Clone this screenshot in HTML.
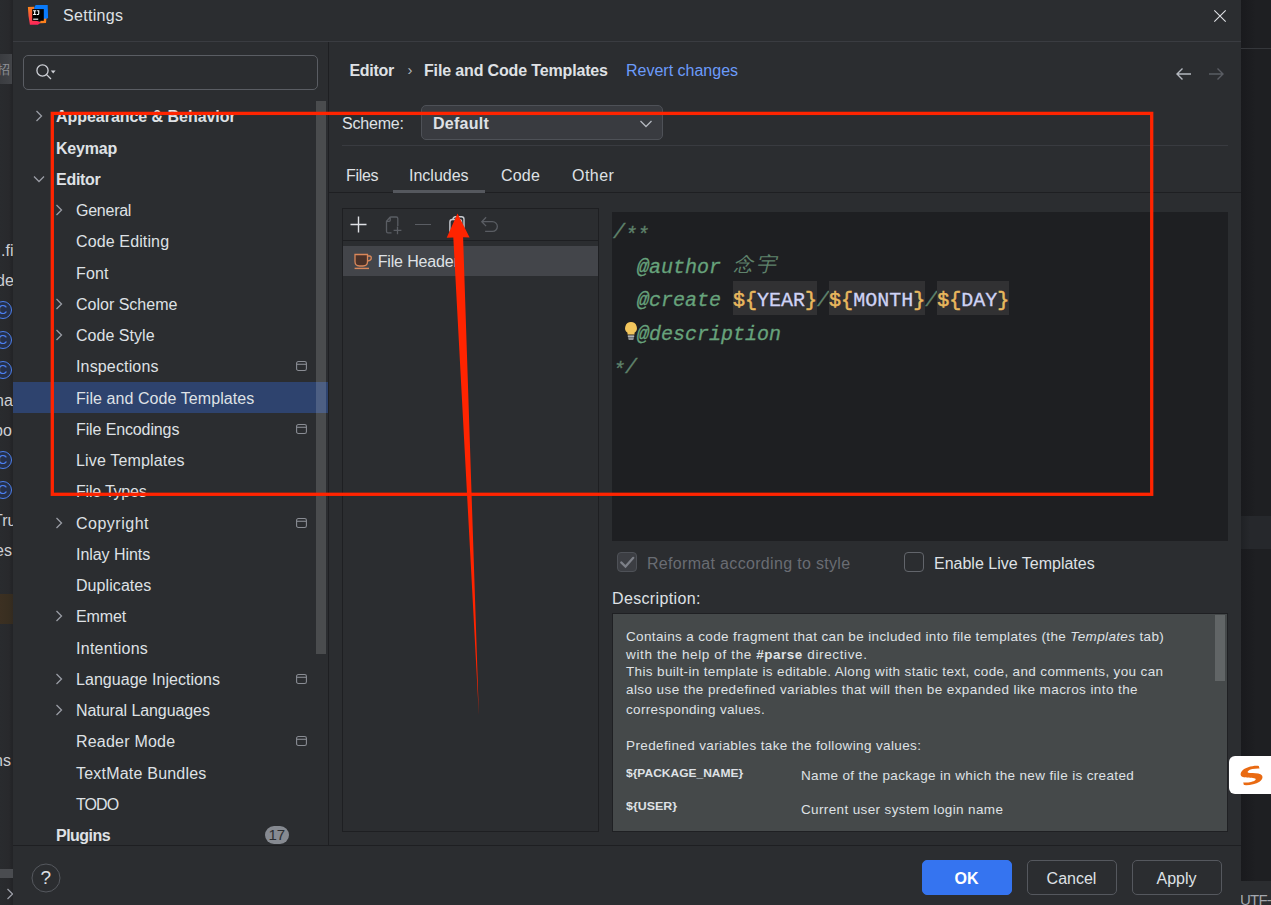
<!DOCTYPE html>
<html>
<head>
<meta charset="utf-8">
<title>Settings</title>
<style>
*{box-sizing:border-box;margin:0;padding:0}
html,body{width:1271px;height:905px;overflow:hidden;background:#1e1f22}
body{font-family:"Liberation Sans",sans-serif;font-size:16px;color:#dfe1e5;position:relative}
.a{position:absolute;white-space:nowrap}
#dlg{position:absolute;left:13px;top:0;width:1227.5px;height:905px;background:#2b2d30;overflow:hidden}
#titlebar{position:absolute;left:0;top:0;width:1228px;height:42px;border-bottom:1px solid #3a3c41}
#vdiv{position:absolute;left:315px;top:42px;width:1px;height:803px;background:#1e1f22}
#search{position:absolute;left:10px;top:55px;width:295px;height:35px;border:1px solid #5a5d63;border-radius:5px}
.row{position:absolute;left:0;width:315px;height:31px;line-height:31px;font-size:16px;color:#dfe1e5;white-space:nowrap}
.row.b{font-weight:bold}
.row span.t{position:absolute;top:1px}
.l0 span.t{left:43px}
.l1 span.t{left:63px}
.sel{background:#2e436e}
.chev{position:absolute;top:9.6px;width:12px;height:12px}
.mod{position:absolute;left:283px;top:10.5px;width:11px;height:10px}
.badge{position:absolute;left:251.5px;top:7px;width:24.5px;height:18px;border-radius:9px;background:#868a91;color:#2b2d30;font-weight:normal;font-size:15px;line-height:18px;text-align:center}
#sbar{position:absolute;left:303.4px;top:101px;width:9.8px;height:553px;background:rgba(255,255,255,0.15)}
#bottomline{position:absolute;left:0;top:845px;width:1228px;height:1px;background:#1e1f22}
.btn{position:absolute;top:859.5px;height:35.5px;border:1px solid #55585e;border-radius:5px;text-align:center;line-height:35px;font-size:16px;color:#dfe1e5}
.tab{position:absolute;top:166px;line-height:20px;font-size:16px;color:#dfe1e5}
#code{position:absolute;left:599px;top:212px;width:616px;height:329px;background:#1e1f22;font-family:"Liberation Mono",monospace;font-size:20px;font-style:italic}
.cl{position:absolute;left:1px;height:33.75px;line-height:33.75px;white-space:pre;color:#5f826b;-webkit-text-stroke:0.3px}
.cl>span,.v>*{position:relative;top:2.8px}
.cl>span.v{top:0}
.cl s{text-decoration:none;position:relative;top:2.5px}
.cj{font-family:"Liberation Sans",sans-serif;font-size:20px;-webkit-text-stroke:0;letter-spacing:2.5px}
.cl>span.cj{top:0.5px}
.tg{color:#67a37c}
.v{background:#313133;font-style:normal;display:inline-block;height:33.75px}
.v b{color:#e8b85e;font-weight:normal;-webkit-text-stroke:0.55px #e8b85e}
.v i{color:#cfd3f5;font-style:normal}
#desc{position:absolute;left:599px;top:613px;width:616px;height:219px;background:#45494a;border:1px solid #1f2023;overflow:hidden;font-size:13.5px;color:#dfe1e5}
#desc .a{line-height:16px}
.cb{position:absolute;top:552px;width:20px;height:20px;border-radius:4px}
.lf{font-size:16px;line-height:20px;color:#cdcfd4}
.ci{left:-6.2px;width:18px;height:18px;border:1.5px solid #4d80ee;border-radius:50%;background:#25304a}
.cc{left:-2.2px;width:10px;font-size:13px;line-height:18px;color:#4d80ee;text-align:center}
</style>
</head>
<body>
<!-- background app fragments -->
<div id="bg">
  <!-- left strip of underlying IDE -->
  <div class="a" style="left:0;top:0;width:13px;height:905px;background:linear-gradient(to right,#292b2e 0,#28292c 9px,#232427 12px,#232427 13px);overflow:hidden">
    <div class="a" style="left:0;top:54.3px;width:12.3px;height:30.2px;background:linear-gradient(to right,#3a3c40,#424448)"></div>
    <div class="a" style="left:-3.5px;top:60px;font-size:13px;line-height:20px;color:#8e9197">招</div>
    <div class="a lf" style="top:241px;left:1px">.fi</div>
    <div class="a lf" style="top:271px;left:-4px">de</div>
    <div class="a ci" style="top:301px"></div><div class="a cc" style="top:301px">C</div>
    <div class="a ci" style="top:331px"></div><div class="a cc" style="top:331px">C</div>
    <div class="a ci" style="top:361px"></div><div class="a cc" style="top:361px">C</div>
    <div class="a lf" style="top:391px;left:-5px">na</div>
    <div class="a lf" style="top:421px;left:-6px">bo</div>
    <div class="a ci" style="top:451px"></div><div class="a cc" style="top:451px">C</div>
    <div class="a ci" style="top:481px"></div><div class="a cc" style="top:481px">C</div>
    <div class="a lf" style="top:511px;left:-7px">Tru</div>
    <div class="a lf" style="top:541px;left:-5px">es</div>
    <div class="a" style="left:0;top:594px;width:13px;height:30.3px;background:linear-gradient(to right,#3c3022 0,#382e20 9px,#332a1f 13px)"></div>
    <div class="a lf" style="top:751px;left:-6px">ns</div>
    <div class="a" style="left:0;top:869px;width:13px;height:9px;background:#4a4c50"></div>
    <svg class="a" style="left:6px;top:888px" width="8" height="12" viewBox="0 0 8 12"><path d="M1.5 1 L6.5 6 L1.5 11" fill="none" stroke="#9a9da5" stroke-width="1.3"/></svg>
  </div>
  <!-- right strip -->
  <div class="a" style="left:1240px;top:0;width:31px;height:905px;background:linear-gradient(to right,#191a1d 0,#191a1d 1px,#1e1f22 16px)"></div>
  <div class="a" style="left:1240px;top:48px;width:31px;height:1px;background:#35373b"></div>
  <div class="a" style="left:1240px;top:516px;width:31px;height:33px;background:linear-gradient(to right,#1f2124 0,#26282c 10px)"></div>
  <div class="a" style="left:1240px;top:881px;width:31px;height:24px;background:#2b2d30"></div>
  <div class="a" style="left:1240px;top:890px;font-size:15px;line-height:20px;color:#a4a7ae;letter-spacing:-0.8px">UTF-8</div>
</div>
<div id="dlg">
  <div id="titlebar"></div>
  <svg class="a" style="left:14px;top:4px" width="22" height="22" viewBox="-0.5 0 22 22">
    <defs><linearGradient id="gl" x1="0" y1="0" x2="0.25" y2="1"><stop offset="0" stop-color="#fc8a17"/><stop offset="0.45" stop-color="#fb5a3a"/><stop offset="1" stop-color="#fe2857"/></linearGradient></defs>
    <polygon points="0.4,3 6.9,2.7 7,16 13.6,18.6 10.4,20.8 2.4,20.8 1,12" fill="url(#gl)"/>
    <polygon points="8.1,1.1 20.2,1.1 20.6,13.9 16.6,15.9 6.5,4.2" fill="#0a7bfb"/>
    <polygon points="13.4,15.2 18.9,14.6 18.5,19.1 12.6,19.2" fill="#fc801d"/>
    <rect x="4.7" y="5.1" width="11.6" height="11.7" fill="#000"/>
    <rect x="5.7" y="14.6" width="5" height="1.2" fill="#e8e8e8"/>
    <path d="M5.6 6.3 h3.2 v1 h-1 v2.6 h1 v1 h-3.2 v-1 h1 v-2.6 h-1z M9.6 6.3 h2.2 v3.2 q0 1.5 -1.5 1.5 h-0.9 v-1 h0.7 q0.6 0 0.6 -0.6 v-2.1 h-1.1z" fill="#fff"/>
  </svg>
  <div class="a" style="left:50px;top:6px;line-height:20px;letter-spacing:0.3px">Settings</div>
  <svg class="a" style="left:1199px;top:8px" width="16" height="16" viewBox="0 0 16 16"><path d="M2.3 2.3 L13.7 13.7 M13.7 2.3 L2.3 13.7" stroke="#dfe1e5" stroke-width="1.1" fill="none"/></svg>

  <div id="vdiv"></div>
  <div id="search"></div>
  <svg class="a" style="left:21px;top:62px" width="24" height="20" viewBox="0 0 24 20"><circle cx="8.5" cy="8.5" r="5.6" fill="none" stroke="#ced0d6" stroke-width="1.3"/><path d="M12.6 12.6 L17 17" stroke="#ced0d6" stroke-width="1.3"/><path d="M16.8 8.4 h4.8 l-2.4 3z" fill="#ced0d6"/></svg>
<div class="row l0 b" style="top:100px;height:32px"><svg class="chev" style="left:20px" viewBox="0 0 12 12"><path d="M3.5 1 L8.5 6 L3.5 11" fill="none" stroke="#9a9da5" stroke-width="1.3"/></svg><span class="t" style="letter-spacing:-0.04px">Appearance &amp; Behavior</span></div>
<div class="row l0 b" style="top:132px;height:31px"><span class="t" style="letter-spacing:-0.19px">Keymap</span></div>
<div class="row l0 b" style="top:163px;height:31px"><svg class="chev" style="left:20px" viewBox="0 0 12 12"><path d="M1 3.5 L6 8.5 L11 3.5" fill="none" stroke="#9a9da5" stroke-width="1.3"/></svg><span class="t" style="letter-spacing:-0.28px">Editor</span></div>
<div class="row l1" style="top:194px;height:31px"><svg class="chev" style="left:40px" viewBox="0 0 12 12"><path d="M3.5 1 L8.5 6 L3.5 11" fill="none" stroke="#9a9da5" stroke-width="1.3"/></svg><span class="t" style="letter-spacing:-0.25px">General</span></div>
<div class="row l1" style="top:225px;height:32px"><span class="t" style="letter-spacing:0.13px">Code Editing</span></div>
<div class="row l1" style="top:257px;height:31px"><span class="t" style="letter-spacing:0.16px">Font</span></div>
<div class="row l1" style="top:288px;height:31px"><svg class="chev" style="left:40px" viewBox="0 0 12 12"><path d="M3.5 1 L8.5 6 L3.5 11" fill="none" stroke="#9a9da5" stroke-width="1.3"/></svg><span class="t" style="letter-spacing:0.00px">Color Scheme</span></div>
<div class="row l1" style="top:319px;height:31px"><svg class="chev" style="left:40px" viewBox="0 0 12 12"><path d="M3.5 1 L8.5 6 L3.5 11" fill="none" stroke="#9a9da5" stroke-width="1.3"/></svg><span class="t" style="letter-spacing:0.03px">Code Style</span></div>
<div class="row l1" style="top:350px;height:32px"><span class="t" style="letter-spacing:0.15px">Inspections</span><svg class="mod" viewBox="0 0 12 11"><rect x="0.6" y="0.6" width="10.8" height="9.8" rx="2" fill="none" stroke="#8a8d94" stroke-width="1.2"/><path d="M0.6 3.6 H11.4" stroke="#8a8d94" stroke-width="1.2"/></svg></div>
<div class="row l1 sel" style="top:382px;height:31px"><span class="t" style="letter-spacing:0.07px">File and Code Templates</span></div>
<div class="row l1" style="top:413px;height:31px"><span class="t" style="letter-spacing:-0.12px">File Encodings</span><svg class="mod" viewBox="0 0 12 11"><rect x="0.6" y="0.6" width="10.8" height="9.8" rx="2" fill="none" stroke="#8a8d94" stroke-width="1.2"/><path d="M0.6 3.6 H11.4" stroke="#8a8d94" stroke-width="1.2"/></svg></div>
<div class="row l1" style="top:444px;height:31px"><span class="t" style="letter-spacing:0.16px">Live Templates</span></div>
<div class="row l1" style="top:475px;height:32px"><span class="t" style="letter-spacing:-0.21px">File Types</span></div>
<div class="row l1" style="top:507px;height:31px"><svg class="chev" style="left:40px" viewBox="0 0 12 12"><path d="M3.5 1 L8.5 6 L3.5 11" fill="none" stroke="#9a9da5" stroke-width="1.3"/></svg><span class="t" style="letter-spacing:0.50px">Copyright</span><svg class="mod" viewBox="0 0 12 11"><rect x="0.6" y="0.6" width="10.8" height="9.8" rx="2" fill="none" stroke="#8a8d94" stroke-width="1.2"/><path d="M0.6 3.6 H11.4" stroke="#8a8d94" stroke-width="1.2"/></svg></div>
<div class="row l1" style="top:538px;height:31px"><span class="t" style="letter-spacing:-0.05px">Inlay Hints</span></div>
<div class="row l1" style="top:569px;height:31px"><span class="t" style="letter-spacing:0.07px">Duplicates</span></div>
<div class="row l1" style="top:600px;height:32px"><svg class="chev" style="left:40px" viewBox="0 0 12 12"><path d="M3.5 1 L8.5 6 L3.5 11" fill="none" stroke="#9a9da5" stroke-width="1.3"/></svg><span class="t" style="letter-spacing:-0.09px">Emmet</span></div>
<div class="row l1" style="top:632px;height:31px"><span class="t" style="letter-spacing:0.27px">Intentions</span></div>
<div class="row l1" style="top:663px;height:31px"><svg class="chev" style="left:40px" viewBox="0 0 12 12"><path d="M3.5 1 L8.5 6 L3.5 11" fill="none" stroke="#9a9da5" stroke-width="1.3"/></svg><span class="t" style="letter-spacing:0.04px">Language Injections</span><svg class="mod" viewBox="0 0 12 11"><rect x="0.6" y="0.6" width="10.8" height="9.8" rx="2" fill="none" stroke="#8a8d94" stroke-width="1.2"/><path d="M0.6 3.6 H11.4" stroke="#8a8d94" stroke-width="1.2"/></svg></div>
<div class="row l1" style="top:694px;height:31px"><svg class="chev" style="left:40px" viewBox="0 0 12 12"><path d="M3.5 1 L8.5 6 L3.5 11" fill="none" stroke="#9a9da5" stroke-width="1.3"/></svg><span class="t" style="letter-spacing:-0.08px">Natural Languages</span></div>
<div class="row l1" style="top:725px;height:32px"><span class="t" style="letter-spacing:0.21px">Reader Mode</span><svg class="mod" viewBox="0 0 12 11"><rect x="0.6" y="0.6" width="10.8" height="9.8" rx="2" fill="none" stroke="#8a8d94" stroke-width="1.2"/><path d="M0.6 3.6 H11.4" stroke="#8a8d94" stroke-width="1.2"/></svg></div>
<div class="row l1" style="top:757px;height:31px"><span class="t" style="letter-spacing:0.21px">TextMate Bundles</span></div>
<div class="row l1" style="top:788px;height:31px"><span class="t" style="letter-spacing:-0.95px">TODO</span></div>
<div class="row l0 b" style="top:819px;height:31px"><span class="t" style="letter-spacing:-0.53px">Plugins</span><span class="badge">17</span></div>
  <div id="sbar"></div>
  <div id="bottomline"></div>
  <svg class="a" style="left:17.7px;top:862.5px" width="30" height="30" viewBox="0 0 30 30"><circle cx="15" cy="15" r="14" fill="none" stroke="#55585e" stroke-width="1"/></svg>
  <div class="a" style="left:17.7px;top:862.5px;width:30px;line-height:30px;text-align:center;font-size:19px;color:#dfe1e5">?</div>

  <div class="btn" style="left:908.5px;width:90px;background:#3574f0;border-color:#3574f0;font-weight:bold;color:#fff">OK</div>
  <div class="btn" style="left:1013.5px;width:90px">Cancel</div>
  <div class="btn" style="left:1118.5px;width:90px">Apply</div>

  <!-- header -->
  <div class="a" style="left:336.5px;top:61px;line-height:20px;font-weight:bold;letter-spacing:-0.3px">Editor</div>
  <div class="a" style="left:394.5px;top:60px;line-height:20px;font-size:15px;color:#b4b8bf">›</div>
  <div class="a" style="left:411px;top:61px;line-height:20px;font-weight:bold;letter-spacing:-0.15px">File and Code Templates</div>
  <div class="a" style="left:613px;top:61px;line-height:20px;color:#6b9bfa">Revert changes</div>
  <svg class="a" style="left:1161.7px;top:67px" width="18" height="14" viewBox="0 0 18 14"><path d="M16 7 H2.5 M7.5 1.5 L2 7 L7.5 12.5" fill="none" stroke="#b4b8bf" stroke-width="1.4"/></svg>
  <svg class="a" style="left:1193.5px;top:67px" width="18" height="14" viewBox="0 0 18 14"><path d="M2 7 H15.5 M10.5 1.5 L16 7 L10.5 12.5" fill="none" stroke="#5a5d63" stroke-width="1.4"/></svg>

  <div class="a" style="left:329px;top:114px;line-height:20px;letter-spacing:-0.2px">Scheme:</div>
  <div class="a" style="left:408px;top:105px;width:241.5px;height:34.5px;border:1px solid #4e5157;border-radius:5px;background:#393b40"></div>
  <div class="a" style="left:420px;top:114px;line-height:20px;font-weight:bold;letter-spacing:0.25px">Default</div>
  <svg class="a" style="left:626px;top:119.3px" width="14" height="10" viewBox="0 0 14 10"><path d="M1.5 2 L7 7.5 L12.5 2" fill="none" stroke="#b4b8bf" stroke-width="1.3"/></svg>
  <div class="a" style="left:329px;top:145px;width:886px;height:1px;background:#393b40"></div>

  <div class="tab" style="left:333px;letter-spacing:-0.3px">Files</div>
  <div class="tab" style="left:396px">Includes</div>
  <div class="tab" style="left:488px;letter-spacing:0.2px">Code</div>
  <div class="tab" style="left:559px;letter-spacing:0.45px">Other</div>
  <div class="a" style="left:315px;top:192px;width:913px;height:1px;background:#1e1f22"></div>
  <div class="a" style="left:380px;top:190px;width:92px;height:3px;background:#55585e"></div>

  <!-- list panel -->
  <div class="a" style="left:329px;top:208px;width:257px;height:624px;border:1px solid #1e1f22"></div>
  <div class="a" style="left:330px;top:240px;width:255px;height:1px;background:#1e1f22"></div>
  <div class="a" style="left:330px;top:246px;width:255px;height:30px;background:#43454a"></div>
  <div class="a" style="left:364.7px;top:252px;line-height:20px;letter-spacing:-0.15px">File Header</div>
  <!-- toolbar icons -->
  <svg class="a" style="left:337px;top:216px" width="17" height="17" viewBox="0 0 17 17"><path d="M8.5 0.5 V16.5 M0.5 8.5 H16.5" stroke="#dfe1e5" stroke-width="1.4"/></svg>
  <svg class="a" style="left:371px;top:215px" width="18" height="20" viewBox="0 0 18 20"><path d="M6.2 2 H12.3 Q13.8 2 13.8 3.5 V11 M6.2 2 L2.5 6.3 V16.2 Q2.5 17.8 4 17.8 H7.5 M6.2 2 V5.2 Q6.2 6.3 5.1 6.3 H2.5" fill="none" stroke="#5a5d63" stroke-width="1.3"/><path d="M13.5 11.6 V19.2 M9.6 15.4 H17.4" stroke="#5a5d63" stroke-width="1.3"/></svg>
  <div class="a" style="left:402px;top:224px;width:16px;height:1.4px;background:#5a5d63"></div>
  <svg class="a" style="left:435px;top:215px" width="18" height="19" viewBox="0 0 18 19"><rect x="5" y="1.7" width="11" height="12" rx="2.5" fill="none" stroke="#c8ccd2" stroke-width="1.4"/><rect x="1.9" y="4.5" width="11.7" height="13" rx="2.5" fill="#2b2d30" stroke="#c8ccd2" stroke-width="1.4"/></svg>
  <svg class="a" style="left:467px;top:215px" width="18" height="19" viewBox="0 0 18 19"><path d="M6.1 2.3 L1.8 6.7 L6.1 11.1 M1.8 6.7 H12.5 A4.85 4.85 0 0 1 12.5 16.4 H5.1" fill="none" stroke="#5a5d63" stroke-width="1.3"/></svg>
  <!-- cup icon -->
  <svg class="a" style="left:340px;top:251.7px" width="20" height="20" viewBox="0 0 20 20"><path d="M2 2.5 H14.5 V9.5 Q14.5 14 10 14 H6.5 Q2 14 2 9.5Z" fill="#4a3128" stroke="#d9875a" stroke-width="1.3"/><path d="M14.5 4 H16.5 Q18.3 4 18.3 6 Q18.3 8.5 14.5 9" fill="none" stroke="#d9875a" stroke-width="1.3"/><path d="M1.6 16.4 H16" stroke="#d9875a" stroke-width="1.4"/></svg>

  <!-- code editor -->
  <div id="code">
    <div class="cl" style="top:1.5px"><span>/<s>**</s></span></div>
    <div class="cl" style="top:35.25px"><span>  </span><span class="tg">@author</span><span> </span><span class="cj">念宇</span></div>
    <div class="cl" style="top:69px"><span>  </span><span class="tg">@create</span><span> </span><span class="v"><b>${</b><i>YEAR</i><b>}</b></span><span>/</span><span class="v"><b>${</b><i>MONTH</i><b>}</b></span><span>/</span><span class="v"><b>${</b><i>DAY</i><b>}</b></span></div>
    <div class="cl" style="top:102.75px"><span>  </span><span class="tg">@description</span></div>
    <div class="cl" style="top:136.5px"><span><s>*</s>/</span></div>
    <svg class="a" style="left:12px;top:109px" width="14" height="20" viewBox="0 0 14 20"><path d="M7 1 A6 6 0 0 1 10.5 11.8 V13.5 H3.5 V11.8 A6 6 0 0 1 7 1Z" fill="#f2c55c"/><rect x="3.8" y="14.5" width="6.4" height="1.3" fill="#d5d6d8"/><path d="M4 16.2 H10 L9.3 19 H4.7Z" fill="#8e9094"/></svg>
  </div>

  <!-- checkboxes -->
  <div class="cb" style="left:604px;background:#3c3e43;border:1px solid #4e5157"></div>
  <svg class="a" style="left:604px;top:552px" width="20" height="20" viewBox="0 0 20 20"><path d="M4.2 10.4 L8.5 14.6 L16.3 5.8" fill="none" stroke="#7d8088" stroke-width="2.2" stroke-linecap="round"/></svg>
  <div class="a" style="left:634px;top:554px;line-height:20px;color:#696c73;letter-spacing:0.32px">Reformat according to style</div>
  <div class="cb" style="left:891px;border:1px solid #62656b"></div>
  <div class="a" style="left:921px;top:554px;line-height:20px">Enable Live Templates</div>
  <div class="a" style="left:599px;top:589px;line-height:20px;letter-spacing:0.35px">Description:</div>

  <div id="desc">
    <div class="a" style="left:13px;top:15px;letter-spacing:0.36px">Contains a code fragment that can be included into file templates (the <i>Templates</i> tab)</div>
    <div class="a" style="left:13px;top:33px;letter-spacing:0.63px">with the help of the <b style="letter-spacing:0.5px">#parse</b> directive.</div>
    <div class="a" style="left:13px;top:50px;letter-spacing:0.355px">This built-in template is editable. Along with static text, code, and comments, you can</div>
    <div class="a" style="left:13px;top:68px;letter-spacing:0.41px">also use the predefined variables that will then be expanded like macros into the</div>
    <div class="a" style="left:13px;top:88px;letter-spacing:0.33px">corresponding values.</div>
    <div class="a" style="left:13px;top:124px;letter-spacing:0.376px">Predefined variables take the following values:</div>
    <div class="a" style="left:13px;top:151px;font-size:10.5px;font-weight:bold;transform:scaleX(1.143);transform-origin:0 0">${PACKAGE_NAME}</div>
    <div class="a" style="left:188px;top:154px;letter-spacing:0.345px">Name of the package in which the new file is created</div>
    <div class="a" style="left:13px;top:184px;font-size:10.5px;font-weight:bold;transform:scaleX(1.18);transform-origin:0 0">${USER}</div>
    <div class="a" style="left:188px;top:188px;letter-spacing:0.366px">Current user system login name</div>
    <div class="a" style="left:602px;top:1px;width:10px;height:66px;background:#616566"></div>
  </div>
</div>

<!-- red annotations -->
<svg class="a" style="left:0;top:0" width="1271" height="905" viewBox="0 0 1271 905">
  <rect x="52.3" y="113.4" width="1099.4" height="380.9" fill="none" stroke="#ff2400" stroke-width="3.3"/>
  <polygon points="457.5,213.6 469.6,237.4 463.1,237.3 478.9,716 453.3,237.5 446.7,237.7" fill="#ff2400"/>
</svg>
<div class="a" style="left:1229px;top:756px;width:50px;height:37.7px;background:#fff;border-radius:6px"></div>
<svg class="a" style="left:1239px;top:764px" width="26" height="24" viewBox="0 0 26 24"><path d="M19.8 1.9 C 14 1.2, 6 3.5, 3 7 C 0.5 10, 1.5 12.8, 5 13.3 C 9 13.9, 14 13.8, 16 14.5 C 17.8 15.3, 16 17, 12 18 C 9 18.7, 6.5 18.6, 4.2 18.5 L 4.9 21.1 C 10 21.4, 16.5 20.6, 20.5 17.8 C 24 15.2, 24.6 12, 21.5 10.2 C 19 9, 14 9.3, 11 9.1 C 8.8 8.9, 8 8.2, 9.2 7 C 11 5.2, 16 4.4, 20.5 4.6 Z" fill="#e96a12"/></svg>
</body>
</html>
